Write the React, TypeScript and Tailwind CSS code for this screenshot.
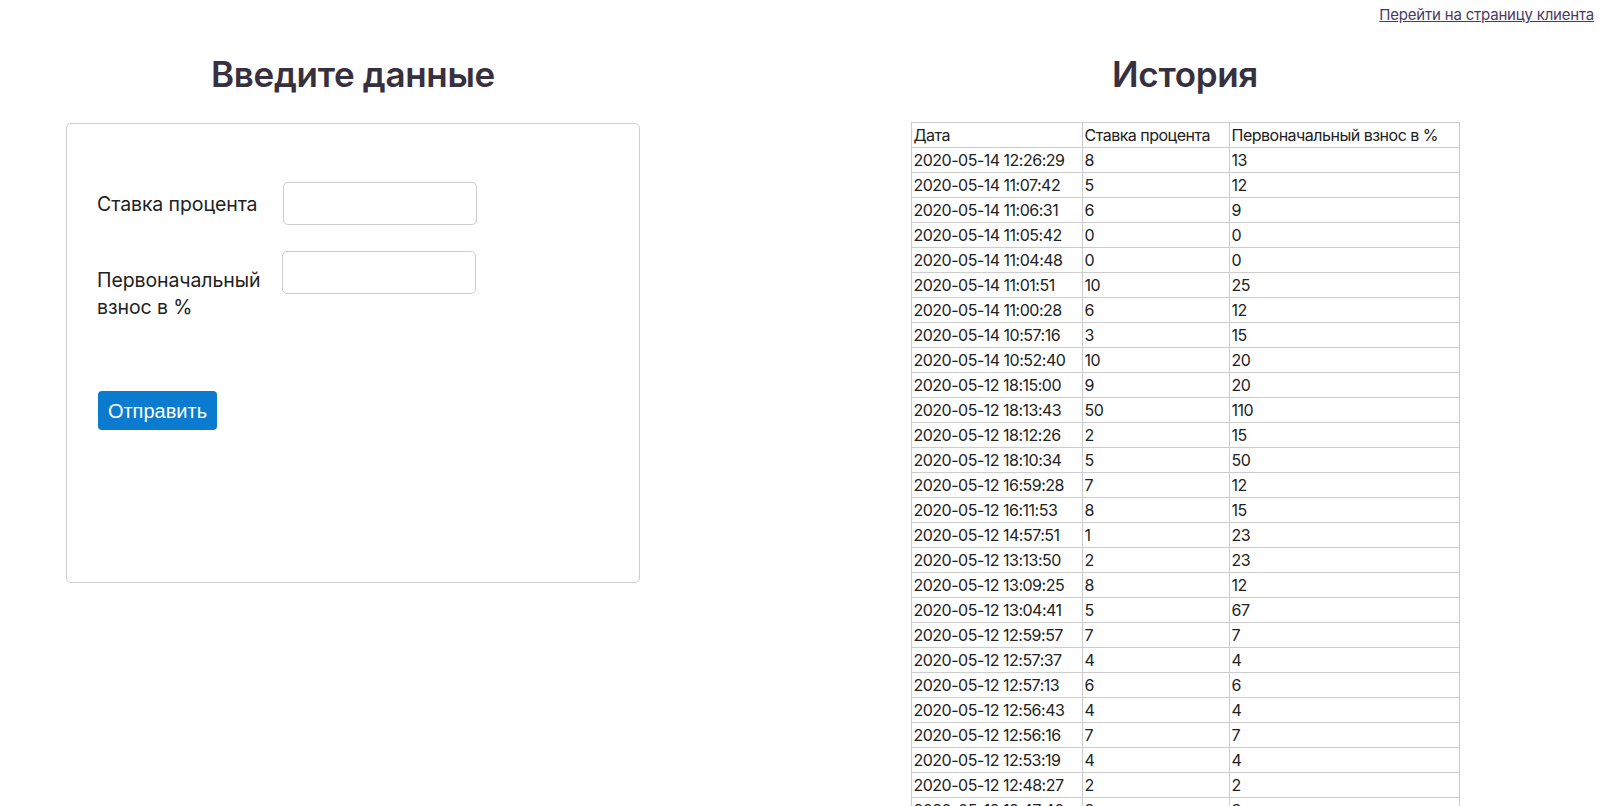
import React from 'react';

const history: [string, string, string][] = [
  ['2020-05-14 12:26:29', '8', '13'],
  ['2020-05-14 11:07:42', '5', '12'],
  ['2020-05-14 11:06:31', '6', '9'],
  ['2020-05-14 11:05:42', '0', '0'],
  ['2020-05-14 11:04:48', '0', '0'],
  ['2020-05-14 11:01:51', '10', '25'],
  ['2020-05-14 11:00:28', '6', '12'],
  ['2020-05-14 10:57:16', '3', '15'],
  ['2020-05-14 10:52:40', '10', '20'],
  ['2020-05-12 18:15:00', '9', '20'],
  ['2020-05-12 18:13:43', '50', '110'],
  ['2020-05-12 18:12:26', '2', '15'],
  ['2020-05-12 18:10:34', '5', '50'],
  ['2020-05-12 16:59:28', '7', '12'],
  ['2020-05-12 16:11:53', '8', '15'],
  ['2020-05-12 14:57:51', '1', '23'],
  ['2020-05-12 13:13:50', '2', '23'],
  ['2020-05-12 13:09:25', '8', '12'],
  ['2020-05-12 13:04:41', '5', '67'],
  ['2020-05-12 12:59:57', '7', '7'],
  ['2020-05-12 12:57:37', '4', '4'],
  ['2020-05-12 12:57:13', '6', '6'],
  ['2020-05-12 12:56:43', '4', '4'],
  ['2020-05-12 12:56:16', '7', '7'],
  ['2020-05-12 12:53:19', '4', '4'],
  ['2020-05-12 12:48:27', '2', '2'],
  ['2020-05-12 12:47:40', '3', '3'],
  ['2020-05-12 12:46:02', '5', '5'],
];

export default function App() {
  return (
    <div className="min-h-screen bg-white text-[#212121] font-['Inter','Noto_Sans',sans-serif]">
      <div className="flex justify-end pr-[8px] pt-[5px] h-[30px]">
        <a href="#" className="text-[15px] leading-[20px] text-[#4a3b66] underline tracking-[-0.2px]">
          Перейти на страницу клиента
        </a>
      </div>

      <div className="flex">
        {/* форма */}
        <div className="w-[706px] px-[66px] shrink-0">
          <h2 className="text-center text-[35px] leading-[44px] font-semibold text-[#37303f] mt-[22px] mb-[27px] tracking-[-0.3px]">
            Введите данные
          </h2>
          <div className="border border-[#cfcfcf] rounded-[5px] h-[460px] pl-[30px] pt-[58px]">
            <div className="flex items-start">
              <label className="w-[186px] text-[19.5px] leading-[27px] pt-[9px] tracking-[-0.1px]">Ставка процента</label>
              <input className="w-[194px] h-[43px] border border-[#cccccc] rounded-[5px] outline-none px-2" />
            </div>
            <div className="flex items-start mt-[26px]">
              <label className="w-[185px] text-[19.5px] leading-[27px] pt-[16px] tracking-[-0.1px]">
                Первоначальный
                <br />
                взнос в %
              </label>
              <input className="w-[194px] h-[43px] border border-[#cccccc] rounded-[5px] outline-none px-2" />
            </div>
            <button className="mt-[70px] ml-px w-[119px] h-[39px] bg-[#0b7bd0] text-white rounded-[4px] text-[20px] font-['Liberation_Sans',sans-serif]">
              Отправить
            </button>
          </div>
        </div>

        {/* история */}
        <div className="w-[834px] ml-[62px] shrink-0 flex flex-col items-center">
          <h2 className="text-center text-[35px] leading-[44px] font-semibold text-[#37303f] mt-[22px] mb-[26px] tracking-[-0.3px]">
            История
          </h2>
          <table className="border-collapse text-[16px] leading-[24px] tracking-[-0.5px] w-[549px]">
            <thead>
              <tr>
                <td className="border border-[#cccccc] px-[2px] w-[171px]">Дата</td>
                <td className="border border-[#cccccc] px-[2px] w-[147px]">Ставка процента</td>
                <td className="border border-[#cccccc] px-[2px]">Первоначальный взнос в %</td>
              </tr>
            </thead>
            <tbody>
              {history.map(([d, r, p]) => (
                <tr key={d}>
                  <td className="border border-[#cccccc] px-[2px]">{d}</td>
                  <td className="border border-[#cccccc] px-[2px]">{r}</td>
                  <td className="border border-[#cccccc] px-[2px]">{p}</td>
                </tr>
              ))}
            </tbody>
          </table>
        </div>
      </div>
    </div>
  );
}
